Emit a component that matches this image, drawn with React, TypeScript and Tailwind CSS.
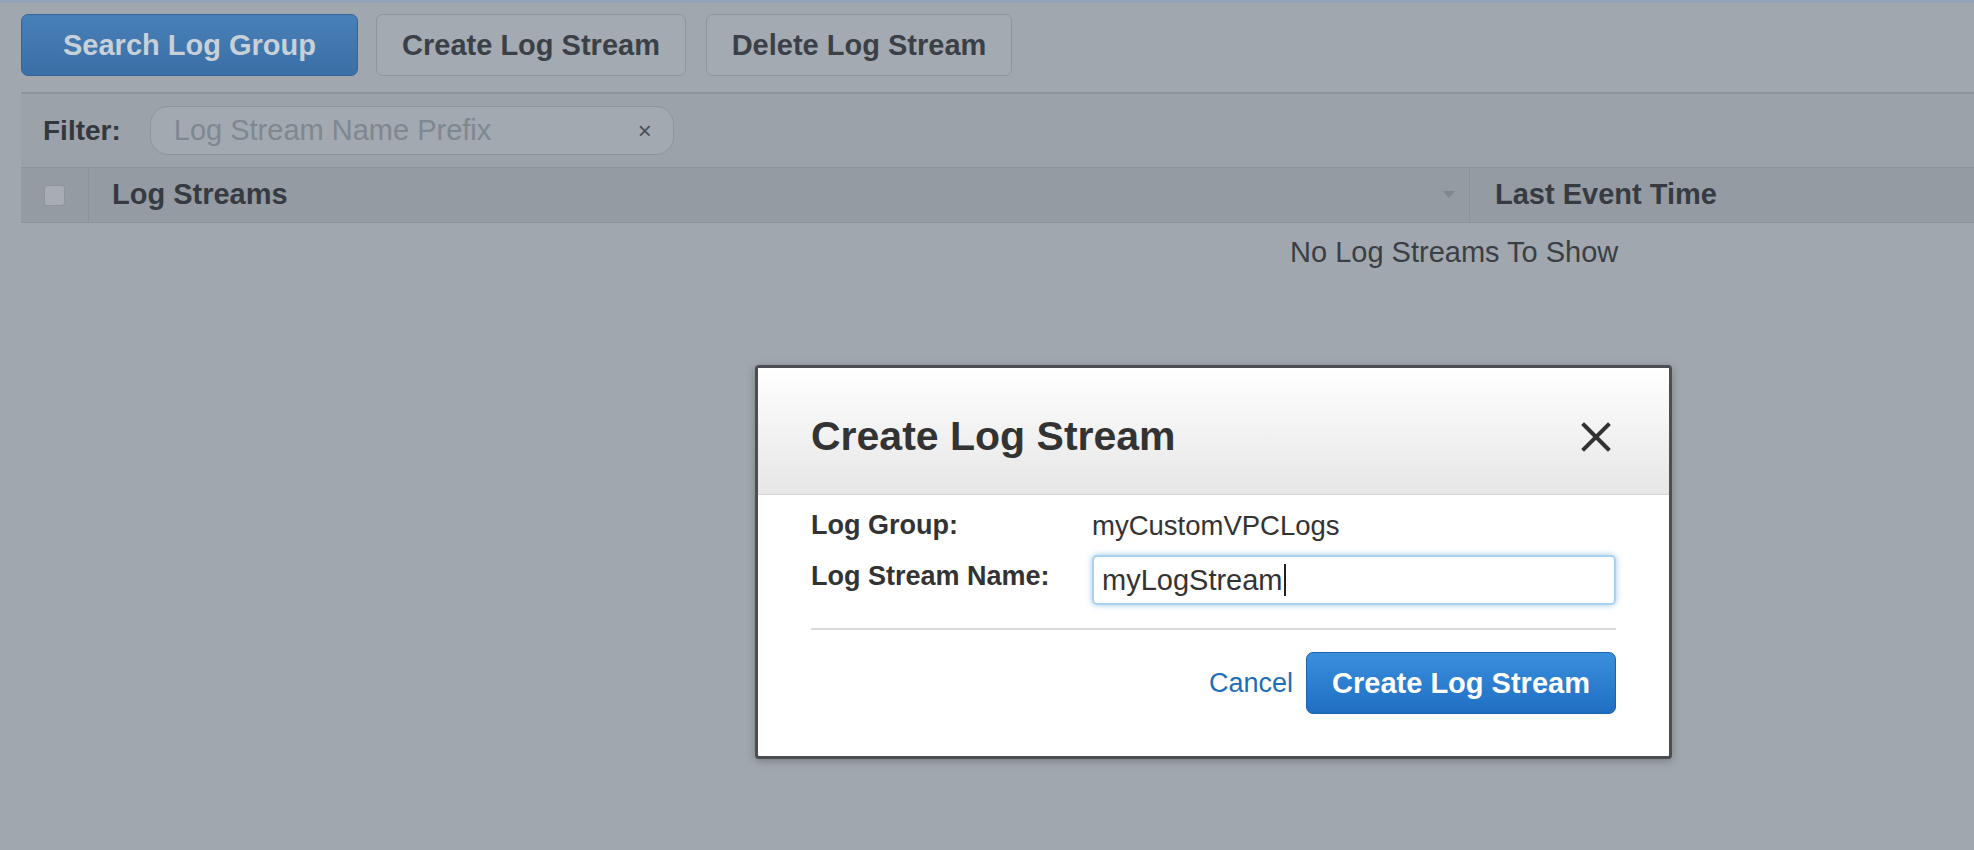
import React from 'react';

const font = { fontFamily: '"Liberation Sans", Arial, Helvetica, sans-serif' };

function CloseIcon() {
  return (
    <svg width="32" height="32" viewBox="0 0 32 32" fill="none">
      <path d="M4 4 L28 28 M28 4 L4 28" stroke="#333" strokeWidth="4" strokeLinecap="square" />
    </svg>
  );
}

export default function App() {
  return (
    <div className="relative h-[850px] w-full overflow-hidden bg-[#a0a7ae] border-t-[3px] border-[#94a4b6]" style={font}>
      {/* toolbar */}
      <div className="flex items-center pl-[21px] pt-[11px]">
        <button className="flex h-[62px] w-[337px] items-center justify-center rounded-[7px] border border-[#33659a] bg-gradient-to-b from-[#4880b9] to-[#3a6fa6] pt-[2px] text-[29px] font-bold text-[#c8d0d8]">
          Search Log Group
        </button>
        <button className="ml-[18px] flex h-[62px] w-[310px] items-center justify-center rounded-[7px] border border-[#8e959c] bg-[#a3aab1] pt-[2px] text-[29px] font-bold text-[#3b4046]">
          Create Log Stream
        </button>
        <button className="ml-[20px] flex h-[62px] w-[306px] items-center justify-center rounded-[7px] border border-[#8e959c] bg-[#a3aab1] pt-[2px] text-[29px] font-bold text-[#3b4046]">
          Delete Log Stream
        </button>
      </div>

      {/* log streams panel */}
      <div className="ml-[21px] mt-[16px] border-t-2 border-[#8d949b]">
        <div className="flex h-[73px] items-center bg-[#9ba2aa] pl-[22px]">
          <span className="text-[28px] font-bold text-[#33383d]">Filter:</span>
          <div className="ml-[29px] flex h-[49px] w-[524px] items-center justify-between rounded-[18px] border border-[#8d949b] bg-[#a2a9b0] pl-[23px] pr-[21px]">
            <span className="text-[29px] text-[#7f878f]">Log Stream Name Prefix</span>
            <span className="text-[24px] text-[#4a5057]">×</span>
          </div>
        </div>
        <div className="flex h-[56px] items-center border-t border-b border-[#8d949b] bg-[#949ba3]">
          <div className="flex h-full w-[68px] items-center border-r border-[#8a9198] pl-[23px]">
            <div className="h-[21px] w-[21px] rounded-[3px] border border-[#8e959c] bg-[#a7adb3]" />
          </div>
          <div className="flex h-full w-[1381px] items-center justify-between border-r border-[#8a9198] pl-[23px] pr-[14px]">
            <span className="text-[29px] font-bold text-[#353b41]">Log Streams</span>
            <svg width="12" height="8" viewBox="0 0 12 8">
              <path d="M0 0 L12 0 L6 7 Z" fill="#7f868d" />
            </svg>
          </div>
          <div className="pl-[25px]">
            <span className="text-[29px] font-bold text-[#353b41]">Last Event Time</span>
          </div>
        </div>
        <div className="pl-[1269px] pt-[8px] text-[29px] text-[#3a3f44]">No Log Streams To Show</div>
      </div>

      {/* modal */}
      <div className="absolute left-[755px] top-[362px] w-[917px] overflow-hidden rounded-[4px] border-[3px] border-[#4b4e52] bg-white shadow-[0_2px_8px_rgba(0,0,0,0.25)]">
        <div className="flex h-[127px] items-center justify-between border-b border-[#d6d6d6] bg-gradient-to-b from-[#ffffff] to-[#e6e6e6] pl-[53px] pr-[57px] pt-[12px]">
          <h2 className="text-[41px] font-bold text-[#333]">Create Log Stream</h2>
          <CloseIcon />
        </div>
        <div className="px-[53px] pb-[42px] pt-[10px]">
          <div className="grid grid-cols-[281px_1fr] items-center gap-y-[9px]">
            <span className="text-[27px] font-bold text-[#333]">Log Group:</span>
            <span className="text-[27.5px] text-[#333]">myCustomVPCLogs</span>
            <span className="mb-[8px] text-[27px] font-bold text-[#333]">Log Stream Name:</span>
            <div className="flex h-[50px] items-center rounded-[5px] border-2 border-[#a9d1f1] bg-white pl-[8px] shadow-[0_0_6px_rgba(120,180,230,0.7)]">
              <span className="text-[29px] text-[#333]">myLogStream</span>
              <span className="ml-[1px] h-[32px] w-[2px] bg-[#222]" />
            </div>
          </div>
          <div className="mt-[23px] h-[2px] bg-[#dadada]" />
          <div className="mt-[22px] flex items-center justify-end">
            <span className="mr-[13px] text-[27px] text-[#1f6db8]">Cancel</span>
            <button className="flex h-[62px] w-[310px] items-center justify-center rounded-[7px] border border-[#1b63ad] bg-gradient-to-b from-[#3a8fdd] to-[#1f6ec2] text-[29px] font-bold text-white">
              Create Log Stream
            </button>
          </div>
        </div>
      </div>
    </div>
  );
}
